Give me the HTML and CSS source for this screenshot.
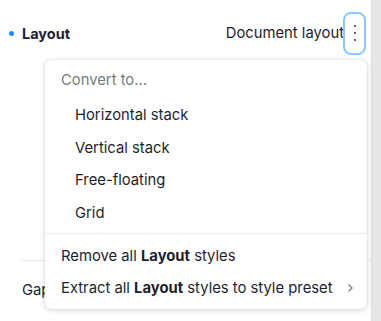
FILE: index.html
```html
<!DOCTYPE html>
<html lang="en">
<head>
    <meta charset="UTF-8">
    <title>Layout</title>
    <link rel="stylesheet" href="styles.css">
</head>
<body>
    <div class="page">
        <div class="panel">
            <div class="section-header">
                <span class="dot"></span>
                <span class="section-title">Layout</span>
                <span class="section-value">Document layout</span>
                <button class="more-btn" aria-label="More">
                    <span></span><span></span><span></span>
                </button>
            </div>

            <div class="section-body"></div>

            <div class="prop-row">
                <span class="prop-label">Gap</span>
            </div>

            <div class="menu">
                <div class="menu-heading">Convert to...</div>
                <div class="menu-item indent">Horizontal stack</div>
                <div class="menu-item indent">Vertical stack</div>
                <div class="menu-item indent">Free-floating</div>
                <div class="menu-item indent">Grid</div>
                <div class="menu-divider"></div>
                <div class="menu-item"><span>Remove all <b>Layout</b> styles</span></div>
                <div class="menu-item has-sub">
                    <span>Extract all <b>Layout</b> styles to style preset</span>
                    <svg class="chevron" width="7" height="10" viewBox="0 0 7 10">
                        <path d="M1.5 1.5 L5 5 L1.5 8.5" fill="none" stroke="#777" stroke-width="1.2"/>
                    </svg>
                </div>
            </div>
        </div>
        <div class="gutter"></div>
    </div>
</body>
</html>
```

FILE: styles.css
```css
body {
    margin: 0;
    font-family: 'Inter', 'Liberation Sans', sans-serif;
    font-size: 14.8px;
    color: #1e1e2c;
    background: #fff;
}

.page {
    display: flex;
    height: 321px;
    overflow: hidden;
}

.panel {
    position: relative;
    width: 371px;
    background: #fff;
}

.gutter {
    flex: 1;
    background: #e6e6e6;
    border-left: 1px solid #dcdcdc;
}

.section-header {
    display: flex;
    align-items: center;
    height: 42px;
    margin-top: 12px;
    padding: 0 5px 0 9px;
}

.dot {
    width: 5px;
    height: 5px;
    border-radius: 50%;
    background: #1a8cff;
    margin-right: 8px;
}

.section-title {
    font-weight: 700;
    font-size: 14.5px;
    flex: 1;
}

.section-value {
    margin-right: -1px;
}

.more-btn {
    width: 23px;
    height: 43px;
    padding: 0;
    border: 2px solid #8cc8ff;
    border-radius: 8px;
    background: #fff;
    display: flex;
    flex-direction: column;
    align-items: center;
    justify-content: center;
    gap: 5px;
}

.more-btn span {
    width: 2px;
    height: 2px;
    border-radius: 50%;
    background: #333;
}

.section-body {
    height: 206px;
}

.prop-row {
    margin-left: 21px;
    border-top: 1px solid #e8e8e8;
    height: 58px;
    display: flex;
    align-items: center;
}

.prop-label {
    margin-left: 1px;
}

.menu {
    position: absolute;
    left: 45px;
    top: 60px;
    width: 322px;
    padding: 4px 0;
    background: #fff;
    border-radius: 6px;
    box-shadow: 0 1px 6px rgba(0, 0, 0, 0.16), 0 0 1px rgba(0, 0, 0, 0.2);
}

.menu-heading {
    height: 32px;
    line-height: 32px;
    padding-left: 16px;
    color: #7a7a7a;
    margin-bottom: 3px;
}

.menu-item {
    height: 32.6px;
    display: flex;
    align-items: center;
    padding-left: 16px;
    padding-right: 12px;
}

.menu-item.indent {
    padding-left: 30px;
}

.menu-item b {
    font-weight: 700;
}

.menu-divider {
    height: 1px;
    background: #ececec;
    margin: 4px 0 5px;
}

.has-sub {
    justify-content: space-between;
}

.chevron {
    margin-right: 1px;
}
```
